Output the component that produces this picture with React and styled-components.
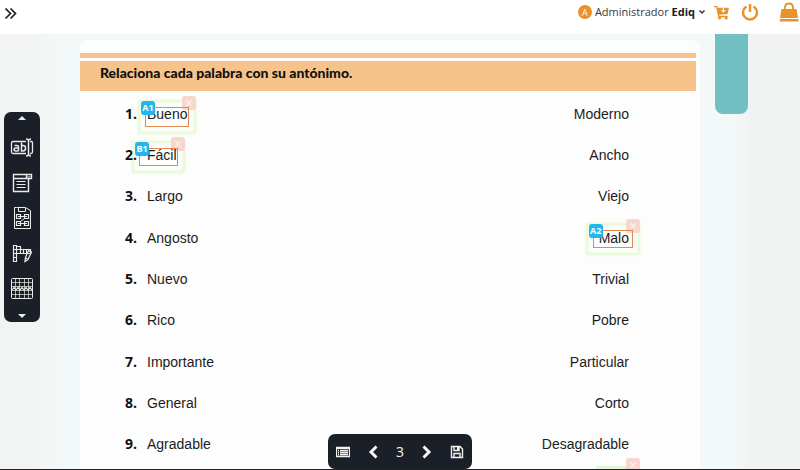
import React from "react";
import styled, { createGlobalStyle, css } from "styled-components";

const colors = {
  ink: "#1b1f28",
  orange: "#e8932a",
  band: "#f6c48b",
  teal: "#72bfc4",
  blue: "#22b5ee",
};

const GlobalStyle = createGlobalStyle`
  *, *::before, *::after { box-sizing: border-box; }
  body { margin: 0; background: #fff; overflow: hidden; }
  h1, ol, ul, p { margin: 0; padding: 0; }
  button { border: 0; padding: 0; background: none; color: inherit; font: inherit; cursor: pointer; }
  svg { display: block; }
`;

const Page = styled.div`
  display: flex;
  flex-direction: column;
  height: 100vh;
  position: relative;
  border-bottom: 1px solid #222228;
  font-family: "Liberation Sans", Arial, sans-serif;
`;

const Header = styled.header`
  display: flex;
  align-items: flex-start;
  justify-content: space-between;
  flex: none;
  height: 34px;
  padding: 0 1px 0 4px;
  background: #fff;
`;

const MenuButton = styled.button`
  margin-top: 7px;
  color: #1d1d1d;
`;

const HeaderTools = styled.div`
  display: flex;
  align-items: center;
  height: 24px;
  color: ${colors.orange};
`;

const Account = styled.button`
  display: flex;
  align-items: center;
  gap: 3px;
  margin-right: 8px;
  color: #3a3a3a;
  font: 11px/16px "Open Sans", sans-serif;

  b { color: #1d1d1d; }
`;

const Avatar = styled.span`
  display: grid;
  place-items: center;
  width: 14px;
  height: 14px;
  border-radius: 50%;
  background: ${colors.orange};
  color: #fff;
  font-size: 9px;
`;

const HeaderIcon = styled.button`
  margin-right: ${(p) => p.$gap || 0}px;
`;

const Stage = styled.main`
  display: grid;
  grid-template-columns: 80px minmax(0, 1fr) 104px;
  flex: 1;
  min-height: 0;
  overflow: hidden;
  background: linear-gradient(90deg, #f2f3f3 0, #f2f5f5 40px, #f3f9f8 64px, #f3f9f8 calc(100% - 64px), #f1f2f2 calc(100% - 48px));
`;

const LeftRail = styled.aside`
  padding: 78px 0 0 4px;
`;

const RightRail = styled.aside`
  padding-left: 19px;
`;

const Bookmark = styled.div`
  width: 33px;
  height: 80px;
  border-radius: 0 0 8px 8px;
  background: ${colors.teal};
`;

const Dock = styled.nav`
  display: flex;
  flex-direction: column;
  align-items: center;
  justify-content: space-between;
  width: 36px;
  height: 210px;
  padding: 4px 0;
  border-radius: 7px;
  background: ${colors.ink};
  color: #e9ece8;
`;

const DockTools = styled.div`
  display: flex;
  flex-direction: column;
  gap: 11px;
  padding-top: 2px;
`;

const Paper = styled.section`
  display: flex;
  flex-direction: column;
  margin-top: 6px;
  border-radius: 8px 8px 0 0;
  background: #fdfdfd;
  box-shadow: 4px 0 0 #fdfdfd;
`;

const Stripe = styled.div`
  height: 5px;
  margin: 13px 0 3px;
  background: ${colors.band};
`;

const Title = styled.h1`
  height: 30px;
  padding: 3px 20px;
  background: ${colors.band};
  color: #111;
  font: 900 14px/18px Lato, sans-serif;
`;

const PairList = styled.ol`
  display: flex;
  flex-direction: column;
  flex: none;
  height: 372px;
  margin-top: 2px;
  padding: 0 67px 0 45px;
  list-style: none;
`;

const Pair = styled.li`
  display: grid;
  grid-template-columns: 22px 1fr auto;
  align-items: center;
  flex: 1;
  isolation: isolate;
  color: #1c1c1c;
  font-size: 14px;
  line-height: 18px;
`;

const Number = styled.span`
  color: #111;
  font: 700 14px/18px "Open Sans", sans-serif;
`;

const Word = styled.span`
  position: relative;
  justify-self: start;
`;

const boxSpots = {
  wide: css`inset: 2px -2px -4px -2px;`,
  shifted: css`inset: 2px -1px -2px -8px;`,
  answer: css`inset: 1px -4px -1px -6px;`,
};

const Selection = styled.span`
  position: absolute;
  ${(p) => boxSpots[p.$spot]}
  border: 1px solid #e28a4e;

  &::before {
    content: "";
    position: absolute;
    z-index: -1;
    inset: -8px;
    border: 2px solid #e9f9d9;
    border-radius: 3px;
    box-shadow: 0 0 2px 1px #f0fbe4, inset 0 0 2px 1px #f0fbe4;
  }
`;

const Tag = styled.span`
  position: absolute;
  top: -7px;
  left: -5px;
  display: grid;
  place-items: center;
  width: 14px;
  height: 14px;
  border-radius: 3px;
  background: ${colors.blue};
  color: #fff;
  font: 700 9px/12px "Open Sans", sans-serif;
`;

const RemoveButton = styled.button`
  position: absolute;
  z-index: -1;
  top: -12px;
  right: -8px;
  display: grid;
  place-items: center;
  width: 14px;
  height: 14px;
  border-radius: 3px;
  background: #f8d5cd;
  color: #fdf0ec;
`;

const NextItem = styled.div`
  position: relative;
  isolation: isolate;
  align-self: flex-end;
  width: 36px;
  margin: 1px 64px 0 0;
  border-top: 4px solid #e4f7d4;
`;

const Pager = styled.nav`
  position: absolute;
  bottom: 0;
  left: 50%;
  display: flex;
  align-items: center;
  justify-content: space-between;
  width: 144px;
  height: 35px;
  padding: 0 8px;
  border-radius: 7px;
  transform: translateX(-50%);
  background: ${colors.ink};
  color: #f4f4ef;
  font: 14px/18px "Open Sans", sans-serif;
`;

function Icon({ size = 24, box = 24, height, children }) {
  return (
    <svg
      width={size}
      height={height || size}
      viewBox={`0 0 ${box} ${height || box}`}
      fill="none"
      stroke="currentColor"
      aria-hidden="true"
    >
      {children}
    </svg>
  );
}

const TextFieldIcon = () => (
  <Icon>
    <path d="M16 5.500H3Q1.500 5.500 1.500 7V16Q1.500 17.500 3 17.500H16M20 5.500H21.500Q22.500 5.500 22.500 7V16Q22.500 17.500 21 17.500H20" strokeWidth="1.300" />
    <path d="M18.500 4V19M16 3Q18.500 3 18.500 5Q18.500 3 21 3M16 20Q18.500 20 18.500 18Q18.500 20 21 20" strokeWidth="1.500" />
    <path d="M4.500 9.500H7Q8.500 9.500 8.500 11V15M8.500 12H6Q4 12 4 13.500T6 15H8.500M11.500 6.500V15H13Q15.500 15 15.500 12.200T13 9.500H11.500" strokeWidth="1.500" />
  </Icon>
);

const DropdownIcon = () => (
  <Icon>
    <path d="M3.500 3.500H21.500V7.500H3.500ZM3.500 7.500V20.500H18.500V7.500M16.500 3.500V7.500" strokeWidth="1.400" />
    <path d="M6.500 10.500H15.500M6.500 13.500H15.500M6.500 16.500H15.500" strokeWidth="1.200" />
    <path d="M17.500 5L19 6.500L20.500 5" />
  </Icon>
);

const MatchIcon = () => (
  <Icon>
    <path d="M6.500 1.500H15.500L20.500 4.500V22.500H4.500V1.500ZM8.500 1.500V5.500H15.500V2" />
    <path d="M6.500 8.500H10.500V12.500H6.500ZM14.500 8.500H18.500V12.500H14.500ZM6.500 15.500H10.500V19.500H6.500ZM14.500 15.500H18.500V19.500H14.500Z" strokeWidth="1.200" />
    <path d="M8 10.500H17M8 17.500H17M10.500 15.500L14.500 12.500" />
  </Icon>
);

const CrosswordIcon = () => (
  <Icon>
    <path d="M3.500 4V20.500H6.500V4.500H3.500M3.500 8.500H20.500V12.500H3.500M3.500 16.500H6.500M10.500 5V12M6.500 5.500H10.500M13.500 8V12M16.500 8V12" strokeWidth="1.200" />
    <path d="M18.500 9.500L21.500 11L18 18.500L15 20.500L15.500 16.500ZM15.500 17L18 18.500" strokeWidth="1.200" />
  </Icon>
);

const WordSearchIcon = () => (
  <Icon>
    <rect x="1.500" y="2.500" width="21" height="20" rx="1" />
    <path d="M5.500 2V22M9.500 2V22M14.500 2V22M18.500 2V22M2 6.500H22M2 10.500H22M2 14.500H22M2 18.500H22" opacity=".7" />
    <path d="M2 14L4 11.500L6 14L8 11.500L10 14L12 11.500L14 14L16 11.500L18 14L20 11.500L22 14" strokeWidth="1.200" />
  </Icon>
);

const dockTools = [
  { label: "Campo de texto", Glyph: TextFieldIcon },
  { label: "Lista desplegable", Glyph: DropdownIcon },
  { label: "Relacionar", Glyph: MatchIcon },
  { label: "Crucigrama", Glyph: CrosswordIcon },
  { label: "Sopa de letras", Glyph: WordSearchIcon },
];

const pairs = [
  { left: "Bueno", right: "Moderno", leftMark: { tag: "A1", spot: "wide" } },
  { left: "Fácil", right: "Ancho", leftMark: { tag: "B1", spot: "shifted" } },
  { left: "Largo", right: "Viejo" },
  { left: "Angosto", right: "Malo", rightMark: { tag: "A2", spot: "answer" } },
  { left: "Nuevo", right: "Trivial" },
  { left: "Rico", right: "Pobre" },
  { left: "Importante", right: "Particular" },
  { left: "General", right: "Corto" },
  { left: "Agradable", right: "Desagradable" },
];

function Remove() {
  return (
    <RemoveButton type="button" aria-label="Eliminar">
      <Icon size={8} box={8}>
        <path d="M1.500 1.500L6.500 6.500M6.500 1.500L1.500 6.500" strokeWidth="1.500" />
      </Icon>
    </RemoveButton>
  );
}

function MarkedWord({ text, mark }) {
  return (
    <Word>
      {text}
      {mark && (
        <Selection $spot={mark.spot}>
          <Tag>{mark.tag}</Tag>
          <Remove />
        </Selection>
      )}
    </Word>
  );
}

function TopBar() {
  return (
    <Header>
      <MenuButton type="button" aria-label="Abrir menú">
        <Icon size={14} box={14}>
          <path d="M1.500 1.500L6.500 6.500L1.500 11.500M6.500 1.500L11.500 6.500L6.500 11.500" strokeWidth="1.700" />
        </Icon>
      </MenuButton>
      <HeaderTools>
        <Account type="button">
          <Avatar>A</Avatar>
          <span>Administrador <b>Ediq</b></span>
          <Icon size={8} box={8}>
            <path d="M1.500 2.500L4 5L6.500 2.500" strokeWidth="1.500" />
          </Icon>
        </Account>
        <HeaderIcon type="button" aria-label="Carrito" $gap={12}>
          <Icon size={15} box={16}>
            <path d="M0 1H3.500L4 3H16L14.500 9.500L5.500 10.500L5.800 11.500H14.500V13H4.500L2.300 2.500H0Z" fill="currentColor" stroke="none" />
            <path d="M10 3V7.500M8 5.500L10 7.500L12 5.500" stroke="#fff" strokeWidth="1.200" />
            <circle cx="6" cy="14" r="1.500" fill="currentColor" stroke="none" />
            <circle cx="13" cy="14" r="1.500" fill="currentColor" stroke="none" />
          </Icon>
        </HeaderIcon>
        <HeaderIcon type="button" aria-label="Salir" $gap={20}>
          <Icon size={18} box={18}>
            <path d="M5.500 3.500A7 7 0 1 0 12.500 3.500M9 1V9" strokeWidth="2.400" />
          </Icon>
        </HeaderIcon>
        <HeaderIcon type="button" aria-label="Tienda">
          <Icon size={20} box={20}>
            <path d="M2.500 7H17.500L19 16H1ZM1 17H19.500V19.500H.5Z" fill="currentColor" stroke="none" />
            <path d="M6 10V5.500Q6 1.500 10 1.500T14 5.500V10" strokeWidth="1.800" />
          </Icon>
        </HeaderIcon>
      </HeaderTools>
    </Header>
  );
}

export default function App() {
  return (
    <>
      <GlobalStyle />
      <Page>
        <TopBar />
        <Stage>
          <LeftRail>
            <Dock aria-label="Herramientas">
              <button type="button" aria-label="Subir">
                <Icon size={8} box={8} height={4}>
                  <path d="M0 4L4 0L8 4Z" fill="currentColor" stroke="none" />
                </Icon>
              </button>
              <DockTools>
                {dockTools.map(({ label, Glyph }) => (
                  <button key={label} type="button" aria-label={label}><Glyph /></button>
                ))}
              </DockTools>
              <button type="button" aria-label="Bajar">
                <Icon size={8} box={8} height={4}>
                  <path d="M0 0H8L4 4Z" fill="currentColor" stroke="none" />
                </Icon>
              </button>
            </Dock>
          </LeftRail>
          <Paper>
            <Stripe />
            <Title>Relaciona cada palabra con su antónimo.</Title>
            <PairList>
              {pairs.map((pair, i) => (
                <Pair key={pair.left}>
                  <Number>{i + 1}.</Number>
                  <MarkedWord text={pair.left} mark={pair.leftMark} />
                  <MarkedWord text={pair.right} mark={pair.rightMark} />
                </Pair>
              ))}
            </PairList>
            <NextItem><Remove /></NextItem>
          </Paper>
          <RightRail><Bookmark /></RightRail>
        </Stage>
        <Pager aria-label="Páginas">
          <button type="button" aria-label="Índice">
            <Icon size={14} box={14}>
              <path d="M.5 2.500H13.500V11.500H.5ZM2 5.500H3M4 5.500H12M2 7.500H3M4 7.500H12M2 9.500H3M4 9.500H12" strokeWidth="1.300" />
              <path d="M0 3H14" strokeWidth="2" />
            </Icon>
          </button>
          <button type="button" aria-label="Anterior">
            <Icon size={14} box={14}>
              <path d="M10.500 1.500L5 7L10.500 12.500" strokeWidth="3" />
            </Icon>
          </button>
          <span>3</span>
          <button type="button" aria-label="Siguiente">
            <Icon size={14} box={14}>
              <path d="M3.500 1.500L9 7L3.500 12.500" strokeWidth="3" />
            </Icon>
          </button>
          <button type="button" aria-label="Guardar">
            <Icon size={14} box={14}>
              <path d="M1.500 1.500H10L12.500 4V12.500H1.500ZM4 12V8.500H10V12M4 2V5.500H9V2" strokeWidth="1.400" />
              <path d="M7 2H9V5H7Z" fill="currentColor" stroke="none" />
            </Icon>
          </button>
        </Pager>
      </Page>
    </>
  );
}
